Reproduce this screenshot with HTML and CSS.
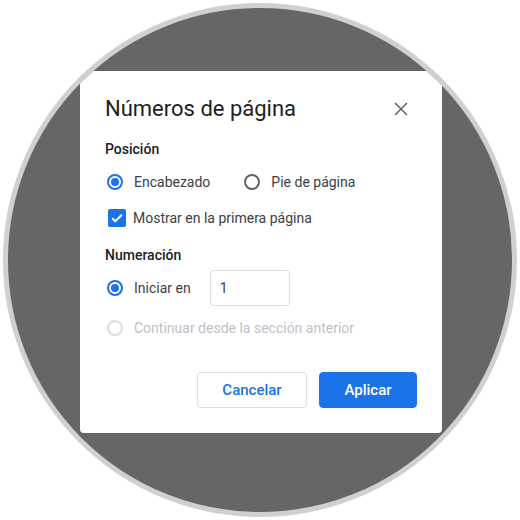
FILE: index.html
```html
<!DOCTYPE html>
<html lang="es">
<head>
<meta charset="utf-8">
<title>Números de página</title>
<link rel="stylesheet" href="styles.css">
</head>
<body>
<div class="stage">
  <div class="circle">
    <div class="dialog">
      <div class="header">
        <h1 class="title">Números de página</h1>
        <button class="close" aria-label="Cerrar">
          <svg width="14" height="14" viewBox="0 0 14 14"><path d="M1 1L13 13M13 1L1 13" stroke="#5f6368" stroke-width="1.5" fill="none"/></svg>
        </button>
      </div>

      <div class="section-title first">Posición</div>
      <div class="options">
        <label class="opt"><span class="radio on"></span><span class="label">Encabezado</span></label>
        <label class="opt"><span class="radio"></span><span class="label">Pie de página</span></label>
      </div>
      <label class="check-row">
        <span class="checkbox">
          <svg width="18" height="18" viewBox="0 0 18 18"><path d="M4.2 9.3L7.3 12.3L13.8 5.8" stroke="#fff" stroke-width="2" fill="none"/></svg>
        </span>
        <span class="label">Mostrar en la primera página</span>
      </label>

      <div class="section-title second">Numeración</div>
      <div class="start-row">
        <span class="radio on"></span><span class="label">Iniciar en</span>
        <div class="num-input">1</div>
      </div>
      <div class="cont-row">
        <span class="radio disabled"></span><span class="label muted">Continuar desde la sección anterior</span>
      </div>

      <div class="actions">
        <button class="btn btn-outline">Cancelar</button>
        <button class="btn btn-primary">Aplicar</button>
      </div>
    </div>
  </div>
</div>
</body>
</html>
```
FILE: styles.css
```css
* { box-sizing: border-box; }
html, body {
  margin: 0;
  padding: 0;
  background: #ffffff;
  font-family: Roboto, "Liberation Sans", Arial, sans-serif;
}
.stage {
  width: 520px;
  height: 520px;
  padding: 3px;
}
.circle {
  width: 514px;
  height: 514px;
  border-radius: 50%;
  border: 5px solid #d0d0d0;
  background: #666666;
  overflow: hidden;
  padding: 63px 0 0 72px;
}
.dialog {
  width: 362px;
  height: 362px;
  background: #ffffff;
  border-radius: 4px;
  padding: 24px 25px 25px 25px;
  display: flex;
  flex-direction: column;
}
.header {
  display: flex;
  align-items: center;
  justify-content: space-between;
  height: 28px;
}
.title {
  margin: 0;
  font-size: 22px;
  font-weight: 400;
  line-height: 28px;
  color: #202124;
}
.close {
  width: 24px;
  height: 24px;
  margin-right: 4px;
  border: 0;
  padding: 0;
  background: transparent;
  display: flex;
  align-items: center;
  justify-content: center;
}
.section-title {
  font-size: 14px;
  font-weight: 500;
  line-height: 20px;
  color: #202124;
}
.section-title.first { margin-top: 16px; }
.section-title.second { margin-top: 17px; }
.label {
  font-size: 14px;
  line-height: 20px;
  color: #3c4043;
}
.label.muted { color: #bdc1c6; }
.options {
  display: flex;
  gap: 32px;
  margin-top: 13px;
  height: 20px;
}
.opt {
  display: flex;
  align-items: center;
}
.radio {
  width: 16px;
  height: 16px;
  margin-left: 2px;
  margin-right: 11px;
  border-radius: 50%;
  border: 2px solid #5f6368;
  flex: none;
  position: relative;
}
.radio.on { border-color: #1a73e8; }
.radio.on::after {
  content: "";
  position: absolute;
  left: 2px;
  top: 2px;
  width: 8px;
  height: 8px;
  border-radius: 50%;
  background: #1a73e8;
}
.radio.disabled { border-color: #dadce0; }
.check-row {
  display: flex;
  align-items: center;
  margin-top: 16px;
  height: 20px;
}
.checkbox {
  width: 18px;
  height: 18px;
  margin-left: 3px;
  margin-right: 7px;
  border-radius: 2px;
  background: #1a73e8;
  display: flex;
  flex: none;
}
.start-row {
  display: flex;
  align-items: center;
  margin-top: 5px;
  height: 36px;
}
.num-input {
  margin-left: 19px;
  width: 80px;
  height: 36px;
  border: 1px solid #dadce0;
  border-radius: 4px;
  padding-left: 9px;
  font-size: 14px;
  line-height: 34px;
  color: #3c4043;
}
.cont-row {
  display: flex;
  align-items: center;
  margin-top: 12px;
  height: 20px;
}
.actions {
  margin-top: auto;
  display: flex;
  justify-content: flex-end;
  gap: 12px;
}
.btn {
  height: 36px;
  border-radius: 4px;
  font-family: Roboto, "Liberation Sans", Arial, sans-serif;
  font-size: 15px;
  font-weight: 500;
  padding: 0;
  cursor: pointer;
}
.btn-outline {
  width: 110px;
  background: #ffffff;
  border: 1px solid #dadce0;
  color: #1a73e8;
}
.btn-primary {
  width: 98px;
  background: #1a73e8;
  border: 1px solid #1a73e8;
  color: #ffffff;
}
```
